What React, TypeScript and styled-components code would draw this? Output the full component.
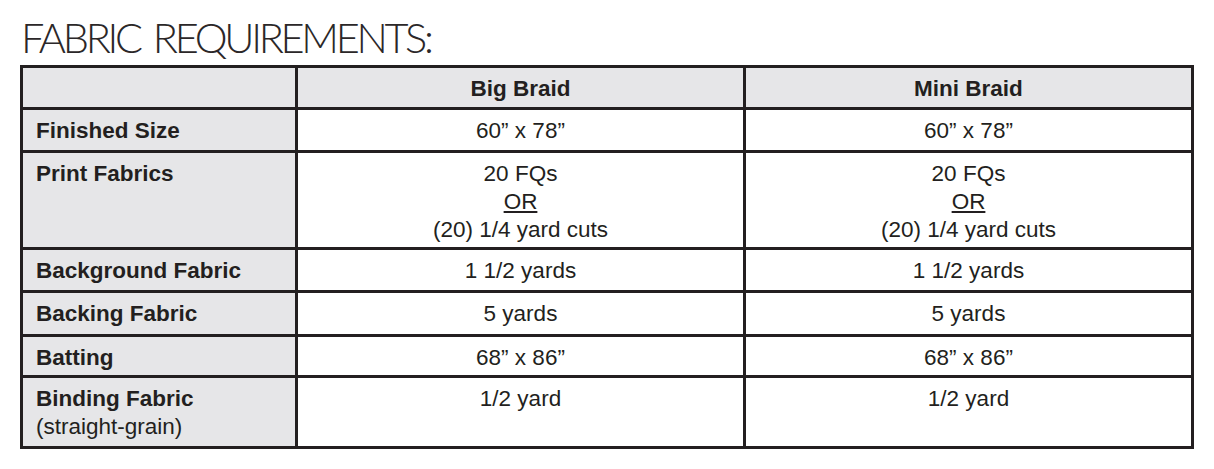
import React from "react";
import styled, { createGlobalStyle } from "styled-components";

const Global = createGlobalStyle`
  html, body { margin: 0; padding: 0; background: #ffffff; }
  body { font-family: "Liberation Sans", Arial, sans-serif; color: #231f20; }
`;

const Page = styled.div`
  width: 1214px;
  height: 469px;
  box-sizing: border-box;
  padding: 14px 0 0 20px;
  display: flex;
  flex-direction: column;
  gap: 6px;
`;

const Title = styled.h1`
  margin: 0 0 0 1px;
  font-family: "Lato", "Liberation Sans", sans-serif;
  font-weight: 300;
  font-size: 41.5px;
  line-height: 45px;
  padding-top: 1px;
  margin-bottom: -1px;
  letter-spacing: -3.3px;
  word-spacing: 5px;
  color: #2b2728;
  white-space: nowrap;
`;

const Table = styled.div`
  width: 1174px;
  box-sizing: border-box;
  display: grid;
  grid-template-columns: 272px 445px 445px;
  grid-template-rows: 39px 40px 94px 40px 41px 38px 68px;
  gap: 3px;
  padding: 3px;
  background: #231f20;
`;

const Cell = styled.div<{ $shade?: boolean; $label?: boolean; $head?: boolean }>`
  background: ${(p) => (p.$shade ? "#e6e6e8" : "#ffffff")};
  box-sizing: border-box;
  padding: 7px 13px 0 13px;
  font-size: 22.5px;
  line-height: 28px;
  font-weight: ${(p) => (p.$label || p.$head ? 700 : 400)};
  text-align: ${(p) => (p.$label ? "left" : "center")};
  color: #231f20;
  display: flex;
  flex-direction: column;
  align-items: ${(p) => (p.$label ? "flex-start" : "center")};
`;

const Sub = styled.span`
  font-weight: 400;
`;

const Under = styled.span`
  text-decoration: underline;
  text-decoration-thickness: 1.5px;
  text-underline-offset: 2px;
`;

type Row = { label: React.ReactNode; value: React.ReactNode };

const printValue = (
  <>
    <span>20 FQs</span>
    <Under>OR</Under>
    <span>(20) 1/4 yard cuts</span>
  </>
);

const rows: Row[] = [
  { label: "Finished Size", value: "60\u201D x 78\u201D" },
  { label: "Print Fabrics", value: printValue },
  { label: "Background Fabric", value: "1 1/2 yards" },
  { label: "Backing Fabric", value: "5 yards" },
  { label: "Batting", value: "68\u201D x 86\u201D" },
  {
    label: (
      <>
        <span>Binding Fabric</span>
        <Sub>(straight-grain)</Sub>
      </>
    ),
    value: "1/2 yard",
  },
];

export default function App() {
  return (
    <>
      <Global />
      <Page>
        <Title>FABRIC REQUIREMENTS:</Title>
        <Table>
          <Cell $shade />
          <Cell $shade $head>Big Braid</Cell>
          <Cell $shade $head>Mini Braid</Cell>
          {rows.map((r, i) => (
            <React.Fragment key={i}>
              <Cell $shade $label>{r.label}</Cell>
              <Cell>{r.value}</Cell>
              <Cell>{r.value}</Cell>
            </React.Fragment>
          ))}
        </Table>
      </Page>
    </>
  );
}
